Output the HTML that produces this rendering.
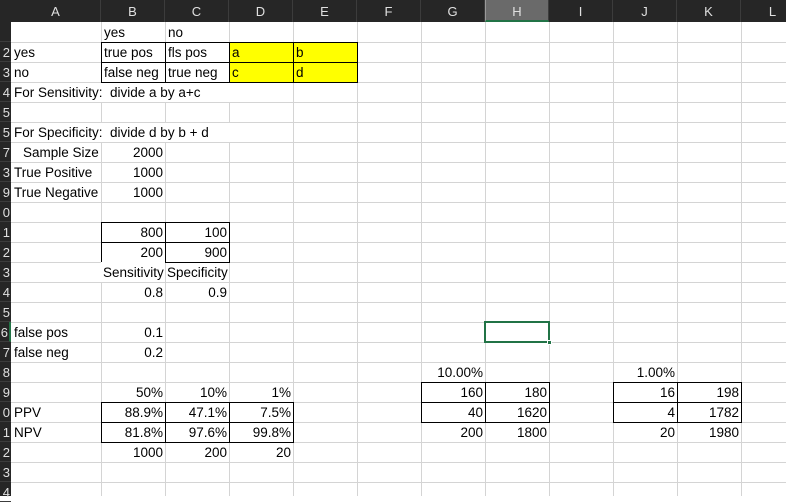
<!DOCTYPE html>
<html><head><meta charset="utf-8"><style>
*{margin:0;padding:0;box-sizing:border-box}
body{width:786px;height:496px;overflow:hidden;background:#fff;position:relative;font-family:"Liberation Sans",sans-serif;font-size:13.5px;color:#000}
.v{position:absolute;top:22px;height:474px;width:1px;background:#d4d4d4}
.h{position:absolute;left:11px;width:775px;height:1px;background:#d4d4d4}
#colh{position:absolute;left:0;top:0;width:786px;height:22px;background:#262626}
#rowh{position:absolute;left:0;top:22px;width:11px;height:474px;background:#262626}
.ch{position:absolute;top:0;height:22px;line-height:23px;text-align:center;color:#e0e0e0;font-size:13px;border-right:1px solid #3c3c3c}
.rh{position:absolute;left:0;width:11px;height:20px;line-height:21px;text-align:right;color:#e0e0e0;font-size:13px;overflow:hidden;border-bottom:1px solid #3c3c3c;padding-right:1px}
.c{position:absolute;height:20px;line-height:21px;white-space:nowrap;padding:0 2px 0 3px;overflow:visible}
.r{text-align:right;padding:0 2px}
.b{position:absolute;border:1px solid #000}
.y{position:absolute;background:#ffff00}
</style></head><body>
<div id="colh">
<div class="ch" style="left:11px;width:90px">A</div>
<div class="ch" style="left:101px;width:64px">B</div>
<div class="ch" style="left:165px;width:64px">C</div>
<div class="ch" style="left:229px;width:64px">D</div>
<div class="ch" style="left:293px;width:64px">E</div>
<div class="ch" style="left:357px;width:64px">F</div>
<div class="ch" style="left:421px;width:64px">G</div>
<div class="ch" style="left:485px;width:64px;background:#6a6a6a;border-bottom:2px solid #217346;border-left:1px solid #999">H</div>
<div class="ch" style="left:549px;width:64px">I</div>
<div class="ch" style="left:613px;width:64px">J</div>
<div class="ch" style="left:677px;width:64px">K</div>
<div class="ch" style="left:741px;width:64px">L</div>
</div>
<div id="rowh"></div>
<div class="rh" style="top:22px"></div>
<div class="rh" style="top:42px">2</div>
<div class="rh" style="top:62px">3</div>
<div class="rh" style="top:82px">4</div>
<div class="rh" style="top:102px">5</div>
<div class="rh" style="top:122px">5</div>
<div class="rh" style="top:142px">7</div>
<div class="rh" style="top:162px">3</div>
<div class="rh" style="top:182px">9</div>
<div class="rh" style="top:202px">0</div>
<div class="rh" style="top:222px">1</div>
<div class="rh" style="top:242px">2</div>
<div class="rh" style="top:262px">3</div>
<div class="rh" style="top:282px">4</div>
<div class="rh" style="top:302px">5</div>
<div class="rh" style="top:322px;border-right:2px solid #217346">6</div>
<div class="rh" style="top:342px">7</div>
<div class="rh" style="top:362px">8</div>
<div class="rh" style="top:382px">9</div>
<div class="rh" style="top:402px">0</div>
<div class="rh" style="top:422px">1</div>
<div class="rh" style="top:442px">2</div>
<div class="rh" style="top:462px">3</div>
<div class="rh" style="top:482px">4</div>

<div class="v" style="left:101px"></div><div class="v" style="left:165px"></div><div class="v" style="left:229px"></div><div class="v" style="left:293px"></div><div class="v" style="left:357px"></div><div class="v" style="left:421px"></div><div class="v" style="left:485px"></div><div class="v" style="left:549px"></div><div class="v" style="left:613px"></div><div class="v" style="left:677px"></div><div class="v" style="left:741px"></div>
<div class="h" style="top:42px"></div><div class="h" style="top:62px"></div><div class="h" style="top:82px"></div><div class="h" style="top:102px"></div><div class="h" style="top:122px"></div><div class="h" style="top:142px"></div><div class="h" style="top:162px"></div><div class="h" style="top:182px"></div><div class="h" style="top:202px"></div><div class="h" style="top:222px"></div><div class="h" style="top:242px"></div><div class="h" style="top:262px"></div><div class="h" style="top:282px"></div><div class="h" style="top:302px"></div><div class="h" style="top:322px"></div><div class="h" style="top:342px"></div><div class="h" style="top:362px"></div><div class="h" style="top:382px"></div><div class="h" style="top:402px"></div><div class="h" style="top:422px"></div><div class="h" style="top:442px"></div><div class="h" style="top:462px"></div><div class="h" style="top:482px"></div>

<div style="position:absolute;left:12px;top:83px;width:280px;height:19px;background:#fff"></div>
<div style="position:absolute;left:12px;top:123px;width:280px;height:19px;background:#fff"></div>

<div class="y" style="left:229px;top:42px;width:128px;height:40px"></div>
<div class="b" style="left:101px;top:42px;width:65px;height:21px"></div>
<div class="b" style="left:165px;top:42px;width:65px;height:21px"></div>
<div class="b" style="left:229px;top:42px;width:65px;height:21px"></div>
<div class="b" style="left:293px;top:42px;width:65px;height:21px"></div>
<div class="b" style="left:101px;top:62px;width:65px;height:21px"></div>
<div class="b" style="left:165px;top:62px;width:65px;height:21px"></div>
<div class="b" style="left:229px;top:62px;width:65px;height:21px"></div>
<div class="b" style="left:293px;top:62px;width:65px;height:21px"></div>

<div class="b" style="left:101px;top:222px;width:65px;height:21px"></div>
<div class="b" style="left:165px;top:222px;width:65px;height:21px"></div>
<div class="b" style="left:101px;top:242px;width:65px;height:21px"></div>
<div class="b" style="left:165px;top:242px;width:65px;height:21px"></div>

<div class="b" style="left:101px;top:402px;width:65px;height:21px"></div>
<div class="b" style="left:165px;top:402px;width:65px;height:21px"></div>
<div class="b" style="left:229px;top:402px;width:65px;height:21px"></div>
<div class="b" style="left:101px;top:422px;width:65px;height:21px"></div>
<div class="b" style="left:165px;top:422px;width:65px;height:21px"></div>
<div class="b" style="left:229px;top:422px;width:65px;height:21px"></div>

<div class="b" style="left:421px;top:382px;width:65px;height:21px"></div>
<div class="b" style="left:485px;top:382px;width:65px;height:21px"></div>
<div class="b" style="left:421px;top:402px;width:65px;height:21px"></div>
<div class="b" style="left:485px;top:402px;width:65px;height:21px"></div>
<div class="b" style="left:613px;top:382px;width:65px;height:21px"></div>
<div class="b" style="left:677px;top:382px;width:65px;height:21px"></div>
<div class="b" style="left:613px;top:402px;width:65px;height:21px"></div>
<div class="b" style="left:677px;top:402px;width:65px;height:21px"></div>

<div style="position:absolute;left:484px;top:321px;width:66px;height:22px;border:2px solid #217346"></div>
<div style="position:absolute;left:547px;top:340px;width:5px;height:5px;background:#217346;border:1px solid #fff"></div>

<div class="c" style="left:101px;top:22px">yes</div>
<div class="c" style="left:165px;top:22px">no</div>
<div class="c" style="left:11px;top:42px">yes</div>
<div class="c" style="left:101px;top:42px">true pos</div>
<div class="c" style="left:165px;top:42px">fls pos</div>
<div class="c" style="left:229px;top:42px">a</div>
<div class="c" style="left:293px;top:42px">b</div>
<div class="c" style="left:11px;top:62px">no</div>
<div class="c" style="left:101px;top:62px">false neg</div>
<div class="c" style="left:165px;top:62px">true neg</div>
<div class="c" style="left:229px;top:62px">c</div>
<div class="c" style="left:293px;top:62px">d</div>
<div class="c" style="left:11px;top:82px">For Sensitivity:&nbsp; divide a by a+c</div>
<div class="c" style="left:11px;top:122px">For Specificity:&nbsp; divide d by b + d</div>
<div class="c" style="left:20px;top:142px">Sample Size</div>
<div class="c r" style="left:101px;top:142px;width:64px">2000</div>
<div class="c" style="left:11px;top:162px">True Positive</div>
<div class="c r" style="left:101px;top:162px;width:64px">1000</div>
<div class="c" style="left:11px;top:182px;width:90px;overflow:hidden">True Negative</div>
<div class="c r" style="left:101px;top:182px;width:64px">1000</div>
<div class="c r" style="left:101px;top:222px;width:64px">800</div>
<div class="c r" style="left:165px;top:222px;width:64px">100</div>
<div class="c r" style="left:101px;top:242px;width:64px">200</div>
<div class="c r" style="left:165px;top:242px;width:64px">900</div>
<div class="c" style="left:101px;top:262px;width:64px;overflow:hidden;background:#fff;padding-left:2px">Sensitivity</div>
<div class="c" style="left:165px;top:262px;padding-left:2px">Specificity</div>
<div class="c r" style="left:101px;top:282px;width:64px">0.8</div>
<div class="c r" style="left:165px;top:282px;width:64px">0.9</div>
<div class="c" style="left:11px;top:322px">false pos</div>
<div class="c r" style="left:101px;top:322px;width:64px">0.1</div>
<div class="c" style="left:11px;top:342px">false neg</div>
<div class="c r" style="left:101px;top:342px;width:64px">0.2</div>
<div class="c r" style="left:421px;top:362px;width:64px">10.00%</div>
<div class="c r" style="left:613px;top:362px;width:64px">1.00%</div>
<div class="c r" style="left:101px;top:382px;width:64px">50%</div>
<div class="c r" style="left:165px;top:382px;width:64px">10%</div>
<div class="c r" style="left:229px;top:382px;width:64px">1%</div>
<div class="c r" style="left:421px;top:382px;width:64px">160</div>
<div class="c r" style="left:485px;top:382px;width:64px">180</div>
<div class="c r" style="left:613px;top:382px;width:64px">16</div>
<div class="c r" style="left:677px;top:382px;width:64px">198</div>
<div class="c" style="left:11px;top:402px">PPV</div>
<div class="c r" style="left:101px;top:402px;width:64px">88.9%</div>
<div class="c r" style="left:165px;top:402px;width:64px">47.1%</div>
<div class="c r" style="left:229px;top:402px;width:64px">7.5%</div>
<div class="c r" style="left:421px;top:402px;width:64px">40</div>
<div class="c r" style="left:485px;top:402px;width:64px">1620</div>
<div class="c r" style="left:613px;top:402px;width:64px">4</div>
<div class="c r" style="left:677px;top:402px;width:64px">1782</div>
<div class="c" style="left:11px;top:422px">NPV</div>
<div class="c r" style="left:101px;top:422px;width:64px">81.8%</div>
<div class="c r" style="left:165px;top:422px;width:64px">97.6%</div>
<div class="c r" style="left:229px;top:422px;width:64px">99.8%</div>
<div class="c r" style="left:421px;top:422px;width:64px">200</div>
<div class="c r" style="left:485px;top:422px;width:64px">1800</div>
<div class="c r" style="left:613px;top:422px;width:64px">20</div>
<div class="c r" style="left:677px;top:422px;width:64px">1980</div>
<div class="c r" style="left:101px;top:442px;width:64px">1000</div>
<div class="c r" style="left:165px;top:442px;width:64px">200</div>
<div class="c r" style="left:229px;top:442px;width:64px">20</div>
</body></html>
